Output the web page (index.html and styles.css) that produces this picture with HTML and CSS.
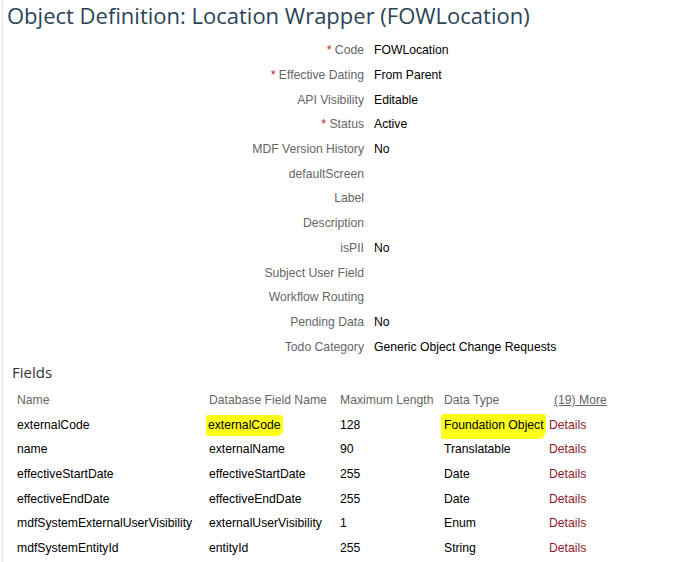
FILE: index.html
```html
<!DOCTYPE html>
<html lang="en">
<head>
  <meta charset="UTF-8" />
  <title>Object Definition: Location Wrapper</title>
  <link rel="stylesheet" href="styles.css">
</head>
<body>
  <div class="page">
    <h1 class="page-title">Object Definition: Location Wrapper (FOWLocation)</h1>

    <!-- Object properties -->
    <div class="props">
      <div class="prop-label"><span class="req">*</span> Code</div>
      <div class="prop-value">FOWLocation</div>
      <div class="prop-label"><span class="req">*</span> Effective Dating</div>
      <div class="prop-value">From Parent</div>
      <div class="prop-label">API Visibility</div>
      <div class="prop-value">Editable</div>
      <div class="prop-label"><span class="req">*</span> Status</div>
      <div class="prop-value">Active</div>
      <div class="prop-label">MDF Version History</div>
      <div class="prop-value">No</div>
      <div class="prop-label">defaultScreen</div>
      <div class="prop-value"></div>
      <div class="prop-label">Label</div>
      <div class="prop-value"></div>
      <div class="prop-label">Description</div>
      <div class="prop-value"></div>
      <div class="prop-label">isPII</div>
      <div class="prop-value">No</div>
      <div class="prop-label">Subject User Field</div>
      <div class="prop-value"></div>
      <div class="prop-label">Workflow Routing</div>
      <div class="prop-value"></div>
      <div class="prop-label">Pending Data</div>
      <div class="prop-value">No</div>
      <div class="prop-label">Todo Category</div>
      <div class="prop-value">Generic Object Change Requests</div>
    </div>

    <!-- Fields -->
    <h2 class="section-title">Fields</h2>
    <table class="fields">
      <thead>
        <tr>
          <th class="col-name">Name</th>
          <th class="col-db">Database Field Name</th>
          <th class="col-len">Maximum Length</th>
          <th class="col-type">Data Type</th>
          <th class="col-more"><a href="#" class="more-link">(19) More</a></th>
        </tr>
      </thead>
      <tbody>
        <tr>
          <td>externalCode</td>
          <td><span class="marker">externalCode</span></td>
          <td>128</td>
          <td><span class="marker marker-wide">Foundation Object</span></td>
          <td><a href="#" class="details">Details</a></td>
        </tr>
        <tr>
          <td>name</td>
          <td>externalName</td>
          <td>90</td>
          <td>Translatable</td>
          <td><a href="#" class="details">Details</a></td>
        </tr>
        <tr>
          <td>effectiveStartDate</td>
          <td>effectiveStartDate</td>
          <td>255</td>
          <td>Date</td>
          <td><a href="#" class="details">Details</a></td>
        </tr>
        <tr>
          <td>effectiveEndDate</td>
          <td>effectiveEndDate</td>
          <td>255</td>
          <td>Date</td>
          <td><a href="#" class="details">Details</a></td>
        </tr>
        <tr>
          <td>mdfSystemExternalUserVisibility</td>
          <td>externalUserVisibility</td>
          <td>1</td>
          <td>Enum</td>
          <td><a href="#" class="details">Details</a></td>
        </tr>
        <tr>
          <td>mdfSystemEntityId</td>
          <td>entityId</td>
          <td>255</td>
          <td>String</td>
          <td><a href="#" class="details">Details</a></td>
        </tr>
      </tbody>
    </table>
  </div>
</body>
</html>
```

FILE: styles.css
```css
body {
  margin: 0;
  background: #fff;
  font-family: 'Liberation Sans', Arial, sans-serif;
  font-size: 12.2px;
  color: #000;
}

.page {
  margin-left: 2px;
  border-left: 1px solid #e4e4e4;
  padding-left: 4px;
  min-height: 562px;
}

.page-title {
  margin: 0;
  height: 38px;
  font-family: 'Open Sans', sans-serif;
  font-weight: normal;
  font-size: 22px;
  line-height: 31px;
  color: #2b4457;
}

/* properties block */
.props {
  display: grid;
  grid-template-columns: 357px auto;
  column-gap: 10px;
  grid-auto-rows: 24.7px;
  align-items: center;
}

.prop-label {
  text-align: right;
  color: #666;
}

.req {
  color: #c4262e;
}

.prop-value {
  color: #000;
}

.section-title {
  margin: 3px 0 0 5px;
  height: 26px;
  font-family: 'Open Sans', sans-serif;
  font-weight: normal;
  font-size: 15px;
  color: #333;
}

/* fields table */
.fields {
  border-collapse: collapse;
  table-layout: fixed;
  width: 620px;
  margin-left: 4px;
}

.fields th,
.fields td {
  height: 24.6px;
  padding: 0 6px;
  text-align: left;
  white-space: nowrap;
}

.fields th {
  font-weight: normal;
  color: #666;
}

.col-name { width: 180px; }
.col-db { width: 119px; }
.col-len { width: 92px; }
.col-type { width: 93px; }

.more-link {
  color: #666;
  margin-left: 5px;
}

.details {
  color: #8e1b2c;
  text-decoration: none;
}

.marker {
  background: #ffff1a;
  padding: 3px 2px 4px;
  margin-left: -3px;
  border-radius: 2px 3px 6px 2px;
}

.marker-wide {
  padding: 4px 2px 7px 3px;
  border-radius: 3px 2px 8px 2px;
}
```
